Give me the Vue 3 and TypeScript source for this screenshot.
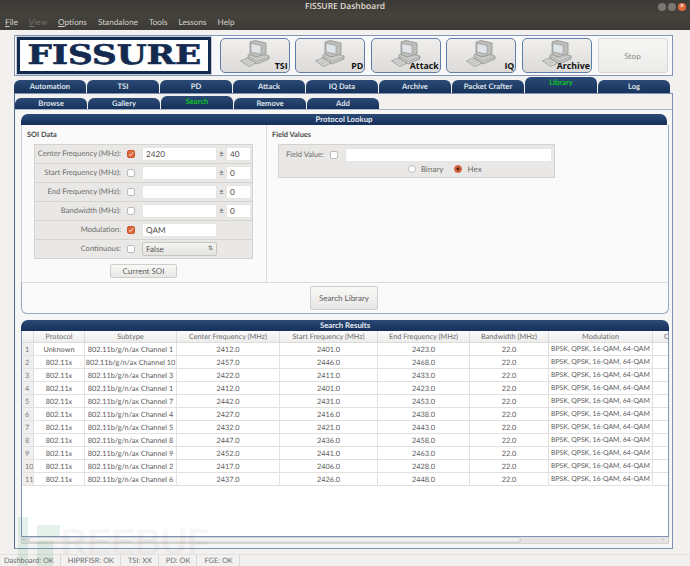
<template>
  <div class="window">
    <header class="titlebar">
      <span class="title">FISSURE Dashboard</span>
      <span class="controls">
        <i class="ctl"></i><i class="ctl"></i><i class="ctl close">×</i>
      </span>
    </header>
    <nav class="menubar">
      <span v-for="(m, i) in menus" :key="m" class="menu" :class="{ off: m === 'View', mnemonic: i < 3 }">{{ m }}</span>
    </nav>

    <section class="toolbar">
      <div class="logo"><span>FISSURE</span></div>
      <button v-for="b in launchers" :key="b" class="launch">
        <svg class="pc" viewBox="0 0 30 27">
          <path d="M8 15 L15 12 L29 16 L29 19 L17 24 L8 18 Z" fill="#c9c9c7" stroke="#8a8a88" stroke-width=".7"/>
          <path d="M8 16 L17 21.5 L29 17" fill="none" stroke="#999" stroke-width=".6"/>
          <path d="M10 2 L15 0.5 L26 3 L26 14 L16 17 L10 14.5 Z" fill="#bdbdbb" stroke="#8a8a88" stroke-width=".7"/>
          <path d="M11 3.5 L21 5.5 L21 14 L11 12 Z" fill="#dfe5e8" stroke="#8a8a88" stroke-width=".5"/>
          <path d="M0.5 21 L7 18 L16 23 L9 26.5 Z" fill="#d8d8d6" stroke="#8a8a88" stroke-width=".7"/>
          <path d="M3.5 21 L10 24.5 M6 20 L12.5 23.5" stroke="#a5a5a3" stroke-width=".6"/>
        </svg>
        <b>{{ b }}</b>
      </button>
      <button class="stop">Stop</button>
    </section>

    <div class="tabs main-tabs">
      <span v-for="t in mainTabs" :key="t" class="tab" :class="{ active: t === 'Library' }">{{ t }}</span>
    </div>
    <main class="frame">
      <div class="tabs sub-tabs">
        <span v-for="t in subTabs" :key="t" class="tab" :class="{ active: t === 'Search' }">{{ t }}</span>
      </div>
      <div class="pane">
        <section class="panel lookup">
          <h2>Protocol Lookup</h2>
          <div class="lookup-body">
            <div class="soi">
              <h3>SOI Data</h3>
              <div class="soi-box">
                <div v-for="r in soiRows" :key="r.label" class="soi-row">
                  <label>{{ r.label }}</label>
                  <span class="check" :class="{ on: r.checked }">
                    <svg v-if="r.checked" viewBox="0 0 9 9"><path d="M1.5 5 L3.6 7 L8 1.5" fill="none" stroke="#fff" stroke-width="1.2"/></svg>
                  </span>
                  <span v-if="r.select" class="select">{{ r.value }}<em>⇅</em></span>
                  <span v-else class="input wide">{{ r.value }}</span>
                  <template v-if="r.tol !== undefined">
                    <span class="pm">±</span>
                    <span class="input small">{{ r.tol }}</span>
                  </template>
                </div>
              </div>
              <button class="btn current">Current SOI</button>
            </div>
            <div class="field">
              <h3>Field Values</h3>
              <div class="field-box">
                <div class="field-row">
                  <label>Field Value:</label>
                  <span class="check"></span>
                  <span class="input grow"></span>
                </div>
                <div class="radios">
                  <span class="radio"></span><span class="rlabel">Binary</span>
                  <span class="radio on"></span><span>Hex</span>
                </div>
              </div>
            </div>
          </div>
          <div class="lookup-foot"><button class="btn search">Search Library</button></div>
        </section>

        <section class="panel results">
          <h2>Search Results</h2>
          <div class="table-wrap">
            <table>
              <colgroup>
                <col v-for="(w, i) in colWidths" :key="i" :style="{ width: w + 'px' }" />
              </colgroup>
              <thead>
                <tr><th></th><th v-for="c in columns" :key="c">{{ c }}</th></tr>
              </thead>
              <tbody>
                <tr v-for="(r, i) in rows" :key="i">
                  <td class="num">{{ i + 1 }}</td>
                  <td>{{ r.protocol }}</td>
                  <td>802.11b/g/n/ax Channel {{ r.channel }}</td>
                  <td>{{ r.center.toFixed(1) }}</td>
                  <td>{{ (r.center - 11).toFixed(1) }}</td>
                  <td>{{ (r.center + 11).toFixed(1) }}</td>
                  <td>22.0</td>
                  <td class="mod">BPSK, QPSK, 16-QAM, 64-QAM</td>
                  <td></td>
                </tr>
              </tbody>
            </table>
          </div>
          <div class="hscroll">
            <span class="arrow">‹</span>
            <span class="thumb"></span>
            <span class="arrow end">›</span>
          </div>
        </section>
      </div>
    </main>

    <footer class="statusbar">
      <span v-for="s in statuses" :key="s">{{ s }}</span>
    </footer>

    <div class="watermark" aria-hidden="true">
      <i class="wm-a"></i><i class="wm-b"></i><i class="wm-c"></i>
      <span>REEBUF</span>
    </div>
  </div>
</template>

<script setup lang="ts">
interface SoiRow {
  label: string
  checked?: boolean
  value?: string
  tol?: string
  select?: boolean
}

const menus = ['File', 'View', 'Options', 'Standalone', 'Tools', 'Lessons', 'Help']
const launchers = ['TSI', 'PD', 'Attack', 'IQ', 'Archive']
const mainTabs = ['Automation', 'TSI', 'PD', 'Attack', 'IQ Data', 'Archive', 'Packet Crafter', 'Library', 'Log']
const subTabs = ['Browse', 'Gallery', 'Search', 'Remove', 'Add']
const statuses = ['Dashboard: OK', 'HIPRFISR: OK', 'TSI: XX', 'PD: OK', 'FGE: OK']

const soiRows: SoiRow[] = [
  { label: 'Center Frequency (MHz):', checked: true, value: '2420', tol: '40' },
  { label: 'Start Frequency (MHz):', tol: '0' },
  { label: 'End Frequency (MHz):', tol: '0' },
  { label: 'Bandwidth (MHz):', tol: '0' },
  { label: 'Modulation:', checked: true, value: 'QAM' },
  { label: 'Continuous:', value: 'False', select: true },
]

const colWidths = [12, 51, 92, 103, 98, 92, 79, 104, 60]
const columns = ['Protocol', 'Subtype', 'Center Frequency (MHz)', 'Start Frequency (MHz)', 'End Frequency (MHz)', 'Bandwidth (MHz)', 'Modulation', 'Continuous']

const rows = [
  { protocol: 'Unknown', channel: 1, center: 2412 },
  { protocol: '802.11x', channel: 10, center: 2457 },
  { protocol: '802.11x', channel: 3, center: 2422 },
  { protocol: '802.11x', channel: 1, center: 2412 },
  { protocol: '802.11x', channel: 7, center: 2442 },
  { protocol: '802.11x', channel: 4, center: 2427 },
  { protocol: '802.11x', channel: 5, center: 2432 },
  { protocol: '802.11x', channel: 8, center: 2447 },
  { protocol: '802.11x', channel: 9, center: 2452 },
  { protocol: '802.11x', channel: 2, center: 2417 },
  { protocol: '802.11x', channel: 6, center: 2437 },
]
</script>

<style>
html, body { margin: 0; background: #f2f1f0; }
</style>

<style scoped>
.window {
  position: relative;
  width: 690px;
  height: 566px;
  overflow: hidden;
  display: flex;
  flex-direction: column;
  background: #f2f1f0;
  color: #5c5c5c;
  font: 7.6px/1 Lato, "Open Sans", sans-serif;
  text-rendering: geometricPrecision;
}
.titlebar {
  height: 15px;
  flex: none;
  display: flex;
  align-items: center;
  justify-content: center;
  position: relative;
  background: linear-gradient(#3b3a36, #45423c);
  color: #e0dcd4;
  font: 600 8.5px/1 "Open Sans", sans-serif;
}
.controls { position: absolute; right: 4px; top: 3px; display: flex; gap: 2px; }
.ctl { width: 8px; height: 8px; border-radius: 50%; background: #7a7873; font-style: normal; }
.close { background: #e2693a; color: #fff; font-size: 7px; line-height: 8px; text-align: center; }
.menubar {
  height: 14px;
  flex: none;
  display: flex;
  align-items: center;
  gap: 11px;
  padding: 0 5px 1px;
  background: linear-gradient(#45423c, #3c3b37);
  color: #d6d2ca;
  font-size: 8.2px;
}
.menu { display: inline-block; }
.menu.mnemonic::first-letter { text-decoration: underline; }
.menubar .off { color: #77746d; }

.toolbar {
  flex: none;
  height: 39px;
  margin: 5px 17px 0 14px;
  padding-left: 2px;
  border: 1px solid #8396b6;
  background: #f8f8f8;
  display: flex;
  align-items: center;
  gap: 5.6px;
}
.logo {
  width: 194px;
  height: 37px;
  margin-right: 3px;
  box-sizing: border-box;
  border: 3px solid #142b50;
  background: #fff;
  display: flex;
  align-items: center;
  justify-content: center;
  outline: 1px solid #c5ccd8;
}
.logo span {
  color: #142b50;
  font: 900 27px/1 "DejaVu Serif", serif;
  -webkit-text-stroke: .6px #142b50;
  transform: scaleX(1.27);
}
.launch {
  position: relative;
  width: 70px;
  height: 35px;
  padding: 0;
  border: 1px solid #5d7ea8;
  border-radius: 5px;
  background: linear-gradient(#f0efee, #dddbd9);
}
.pc { position: absolute; left: 19px; top: 1px; width: 30px; height: 27px; }
.launch b {
  position: absolute;
  right: 1px;
  bottom: 1px;
  color: #111;
  font: 700 8.8px/1 "Open Sans", sans-serif;
}
.stop {
  width: 70px;
  height: 35px;
  padding: 0;
  border: 1px solid #d8d6d3;
  border-radius: 3px;
  background: linear-gradient(#f7f7f6, #ecebea);
  color: #8e8c8a;
  font: 8.2px Lato, sans-serif;
}

.tabs { display: flex; align-items: flex-end; flex: none; }
.tab {
  box-sizing: border-box;
  width: 72px;
  margin-right: 1px;
  height: 13px;
  border-radius: 6px 6px 0 0;
  background: linear-gradient(#2b4a76, #16325a);
  color: #dfe4ec;
  font-weight: 700;
  font-size: 7.6px;
  display: flex;
  align-items: center;
  justify-content: center;
}
.tab.active { height: 16px; padding-bottom: 4px; color: #0bc41e; }
.main-tabs { height: 16px; margin: 1px 0 0 14px; }
.sub-tabs { height: 13px; margin: 2px 0 0; }
.sub-tabs .tab { height: 11px; }
.sub-tabs .tab.active { height: 13px; padding-bottom: 2px; }

.frame {
  flex: none;
  width: 659px;
  height: 456px;
  margin-left: 14px;
  box-sizing: border-box;
  border: 1px solid #7f93b4;
  border-left-color: #4e6a96;
  display: flex;
  flex-direction: column;
}
.pane {
  flex: 1;
  min-height: 0;
  border-top: 1px solid #a9b6cb;
  background: #f6f6f5;
  padding: 4px 3px 4px 6px;
  display: flex;
  flex-direction: column;
  gap: 6px;
}
.panel { display: flex; flex-direction: column; min-height: 0; }
.panel h2 {
  flex: none;
  height: 11px;
  margin: 0;
  border-radius: 7px 7px 0 0;
  background: linear-gradient(#2b4a76, #14305a);
  color: #e3e7ee;
  font-size: 7.8px;
  font-weight: 700;
  display: flex;
  align-items: center;
  justify-content: center;
}
.lookup h2 { margin-right: 2px; }

.lookup { height: 200px; flex: none; }
.lookup-body {
  flex: 1;
  min-height: 0;
  display: flex;
  background: #fafafa;
  border-left: 1px solid #c9d0dc;
  border-right: 1px solid #9aa8c0;
}
.soi {
  width: 245px;
  flex: none;
  box-sizing: border-box;
  border-right: 1px solid #dcdcda;
  padding: 6px 0 0 5px;
  display: flex;
  flex-direction: column;
}
h3 { margin: 0 0 5px; font-size: 7.4px; font-weight: 700; line-height: 8px; color: #4c4c4c; }
.soi-box {
  width: 219px;
  margin-left: 7px;
  box-sizing: border-box;
  border: 1px solid #d4d3d0;
  background: #e9e8e6;
}
.soi-row {
  height: 19px;
  box-sizing: border-box;
  display: flex;
  align-items: center;
  border-bottom: 1px solid #d4d3d0;
}
.soi-row:last-child { border-bottom: 0; height: 18px; }
.soi-row label { width: 86px; flex: none; text-align: right; white-space: nowrap; color: #6e6d6b; }
.check {
  box-sizing: border-box;
  width: 8px;
  height: 8px;
  margin: 0 7px 0 6px;
  border: 1px solid #bdbcb9;
  border-radius: 2px;
  background: #fff;
  flex: none;
}
.check.on { background: #e0683c; border-color: #c9572e; }
.check svg { display: block; width: 100%; height: 100%; overflow: visible; }
.input {
  box-sizing: border-box;
  height: 14px;
  padding-left: 3px;
  background: #fff;
  border: 1px solid #e6e5e3;
  display: flex;
  align-items: center;
  font-size: 8.2px;
  color: #4a4a4a;
}
.wide { width: 75px; }
.small { width: 25px; }
.grow { flex: 1; margin-right: 2px; }
.pm { width: 9px; text-align: center; }
.select {
  box-sizing: border-box;
  width: 75px;
  height: 14px;
  padding: 0 3px;
  border: 1px solid #c8c7c4;
  border-radius: 2px;
  background: linear-gradient(#f4f4f3, #e4e3e1);
  display: flex;
  align-items: center;
  justify-content: space-between;
  font-size: 8.2px;
}
.select em { font-style: normal; font-size: 6px; }
.btn {
  padding: 0;
  border: 1px solid #cfcecb;
  border-radius: 2px;
  background: linear-gradient(#f8f8f7, #e8e7e5);
  color: #5f5f5f;
  font: 8px Lato, sans-serif;
  text-rendering: geometricPrecision;
}
.current { width: 67px; height: 14px; margin: 5px 0 0 83px; }
.field { flex: 1; padding: 6px 0 0 5px; }
.field-box {
  width: 277px;
  height: 34px;
  margin-left: 6px;
  box-sizing: border-box;
  border: 1px solid #d4d3d0;
  background: #e9e8e6;
  padding-top: 2px;
}
.field-row { display: flex; align-items: center; height: 15px; }
.field-row label { width: 45px; text-align: right; color: #6e6d6b; }
.radios {
  display: flex;
  align-items: center;
  height: 14px;
  padding-left: 129px;
  font-size: 8px;
  color: #6e6d6b;
}
.radio {
  box-sizing: border-box;
  width: 8px;
  height: 8px;
  margin-right: 5px;
  border: 1px solid #bdbcb9;
  border-radius: 50%;
  background: #fff;
}
.radio.on { background: radial-gradient(circle, #5b2a14 0 1.4px, #e0683c 1.8px); border-color: #c9572e; }
.rlabel { margin-right: 11px; }
.lookup-foot {
  height: 32px;
  flex: none;
  box-sizing: border-box;
  border: 1px solid #9aa8c0;
  border-top: 1px solid #dcdcda;
  border-radius: 0 0 6px 6px;
  background: #fafafa;
  display: flex;
  align-items: center;
  justify-content: center;
}
.search { width: 68px; height: 24px; margin-right: 2px; }

.results { flex: 1; }
.table-wrap {
  flex: 1;
  min-height: 0;
  overflow: hidden;
  background: #fff;
  border: 1px solid #7f93b4;
  border-top: 0;
}
table {
  table-layout: fixed;
  width: 691px;
  border-collapse: separate;
  border-spacing: 0;
  font-size: 7.3px;
  color: #5a5a5a;
}
th {
  height: 12px;
  padding: 1px 0 0;
  box-sizing: border-box;
  background: linear-gradient(#fbfbfb, #eeedec);
  border-right: 1px solid #dddcda;
  border-bottom: 1px solid #dddcda;
  font-weight: 400;
  white-space: nowrap;
  overflow: hidden;
  color: #6a6a6a;
}
td {
  height: 13px;
  padding: 1px 0 0;
  box-sizing: border-box;
  text-align: center;
  white-space: nowrap;
  overflow: hidden;
  border-right: 1px solid #e2e1df;
  border-bottom: 1px solid #e2e1df;
}
td.num { background: #f0efee; text-align: left; padding-left: 3px; color: #777; }
td.mod { font-size: 6.9px; text-align: left; padding-left: 2px; }
.hscroll {
  height: 7px;
  flex: none;
  position: relative;
  display: flex;
  align-items: center;
  padding: 0 1px;
  background: #e4e3e1;
  border: 1px solid #d5d4d2;
  border-top: 0;
  box-sizing: border-box;
}
.arrow { width: 5px; font-size: 6px; color: #777; }
.thumb {
  width: 493px;
  height: 6px;
  border-radius: 3px;
  background: linear-gradient(#fafafa, #e6e5e3);
  border: 1px solid #cfcecb;
  box-sizing: border-box;
}
.arrow.end { margin-left: auto; }

.statusbar {
  flex: none;
  height: 13px;
  margin-top: 5px;
  padding-bottom: 1px;
  box-sizing: border-box;
  border-top: 1px solid #e2e1df;
  display: flex;
  align-items: center;
  font-size: 7.4px;
  color: #6c6c6c;
}
.statusbar span {
  padding: 0 6px 0 7px;
  line-height: 11px;
  border-right: 1px solid #d9d8d6;
}
.statusbar span:first-child { padding-left: 4px; }

.watermark { position: absolute; left: 0; top: 0; width: 690px; height: 566px; pointer-events: none; }
.watermark i { position: absolute; background: rgba(80, 160, 120, .15); }
.wm-a { left: 18px; top: 517px; width: 10px; height: 49px; }
.wm-b { left: 37px; top: 525px; width: 23px; height: 12px; }
.wm-c { left: 37px; top: 541px; width: 16px; height: 25px; }
.watermark span {
  position: absolute;
  left: 61px;
  top: 524px;
  color: rgba(0, 0, 0, .055);
  font: 700 36px/1 "Liberation Sans", sans-serif;
}
</style>
